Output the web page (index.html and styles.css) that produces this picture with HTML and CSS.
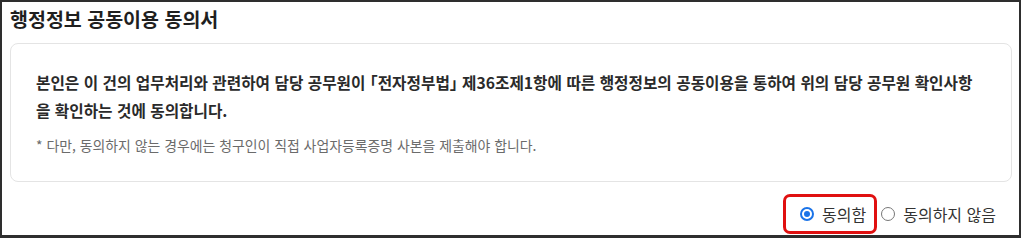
FILE: index.html
```html
<!DOCTYPE html>
<html lang="ko">
<head>
<meta charset="utf-8">
<link rel="stylesheet" href="styles.css">
</head>
<body>
<div class="frame">
  <h2 class="title">행정정보 공동이용 동의서</h2>
  <div class="card">
    <p class="main">본인은 이 건의 업무처리와 관련하여 담당 공무원이 「전자정부법」 제36조제1항에 따른 행정정보의 공동이용을 통하여 위의 담당 공무원 확인사항을 확인하는 것에 동의합니다.</p>
    <p class="note">* 다만, 동의하지 않는 경우에는 청구인이 직접 사업자등록증명 사본을 제출해야 합니다.</p>
  </div>
  <div class="choices">
    <label class="choice highlighted"><span class="radio checked"></span>동의함</label>
    <label class="choice"><span class="radio"></span>동의하지 않음</label>
  </div>
</div>
</body>
</html>
```

FILE: styles.css
```css
* { box-sizing: border-box; }
html, body { margin: 0; padding: 0; background: #fff; }
body { font-family: "Noto Sans CJK KR", "Noto Sans", sans-serif; color: #222; }
.frame {
  width: 1021px;
  height: 238px;
  border: 2px solid #2e2e2e;
  border-bottom-width: 3px;
  padding: 0 7px 0 8px;
  display: flex;
  flex-direction: column;
}
.title {
  margin: 0;
  font-size: 19.5px;
  font-weight: 700;
  line-height: 28px;
  padding-top: 3px;
  height: 41px;
  color: #1f1f1f;
}
.card {
  border: 1px solid #e4e4e4;
  border-radius: 8px;
  padding: 25px 25px 20px 25px;
  height: 139px;
}
.main {
  margin: 0;
  font-size: 15.7px;
  font-weight: 700;
  line-height: 28px;
  color: #2a2a2a;
  font-feature-settings: "halt" 1;
}
.note {
  margin: 10px 0 0;
  font-size: 13.9px;
  line-height: 20px;
  color: #6b6b6b;
}
.choices {
  display: flex;
  justify-content: flex-end;
  align-items: center;
  margin-top: 12px;
  padding-right: 16px;
  gap: 4px;
}
.choice {
  display: flex;
  align-items: center;
  font-size: 16px;
  color: #333;
  height: 40px;
}
.choice.highlighted {
  border: 3px solid #e01010;
  border-radius: 7px;
  padding: 0 8px 0 14px;
}
.radio {
  width: 14px;
  height: 14px;
  border-radius: 50%;
  border: 1px solid #777;
  margin-right: 8px;
  display: inline-block;
  position: relative;
}
.radio.checked {
  border: 2px solid #1a73e8;
  background: #fff;
}
.radio.checked::after {
  content: "";
  position: absolute;
  left: 2px; top: 2px;
  width: 6px; height: 6px;
  border-radius: 50%;
  background: #1a73e8;
}
```
